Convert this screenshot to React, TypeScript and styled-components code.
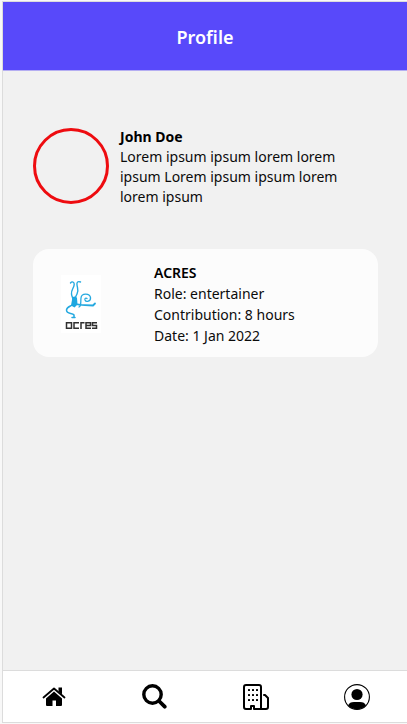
import React from "react";
import styled, { createGlobalStyle } from "styled-components";

const GlobalStyle = createGlobalStyle`
  *, *::before, *::after { box-sizing: border-box; }
  body {
    margin: 0;
    background: #f8f8f8;
    color: #0b0b0b;
    font-family: "Noto Sans", "Open Sans", sans-serif;
    font-size: 14px;
    line-height: 20px;
  }
`;

const Page = styled.div`
  display: flex;
  flex-direction: column;
  min-height: 100vh;
  padding: 1px 0 1px 2px;
`;

const Screen = styled.div`
  display: flex;
  flex: 1;
  flex-direction: column;
  border: 1px solid #dcdcdc;
  border-right: 0;
  background: #f1f1f1;
`;

const Header = styled.header`
  display: flex;
  align-items: center;
  justify-content: center;
  padding: 23px 16px 21px;
  border-bottom: 1px solid #b5aef2;
  background: #5849fa;
`;

const Title = styled.h1`
  margin: 0;
  color: #fff;
  font-size: 18px;
  font-weight: 600;
  line-height: 24px;
`;

const Content = styled.main`
  display: flex;
  flex: 1;
  flex-direction: column;
  gap: 42px;
  padding: 56px 29px 40px 30px;
`;

const Profile = styled.section`
  display: flex;
  align-items: flex-start;
  gap: 11px;
`;

const Avatar = styled.div`
  flex: none;
  width: 76px;
  height: 76px;
  margin-top: 1px;
  border: 3px solid #ee0c10;
  border-radius: 50%;
`;

const Name = styled.h2<{ $weight: number }>`
  margin: 0;
  color: #000;
  font-size: 14px;
  font-weight: ${(p) => p.$weight};
  line-height: inherit;
`;

const Text = styled.p`
  margin: 0;
`;

const Card = styled.article`
  display: flex;
  align-items: center;
  gap: 53px;
  padding: 13px 28px 11px;
  border-radius: 16px;
  background: #fcfcfc;
  line-height: 21px;
`;

const Logo = styled.svg`
  flex: none;
  width: 40px;
  height: 58px;
  background: #fff;
`;

const Nav = styled.nav`
  display: grid;
  grid-template-columns: repeat(4, 1fr);
  border-top: 1px solid #dcdcdc;
  background: #fff;
`;

const NavLink = styled.a`
  display: flex;
  align-items: center;
  justify-content: center;
  height: 51px;
  color: #000;
`;

const AcresLogo = () => (
  <Logo viewBox="0 0 40 58" role="img" aria-label="acres">
    <g fill="none" stroke="#25a9e0" strokeLinecap="round" strokeLinejoin="round">
      <path strokeWidth="1.4" d="M9.500 8c1.500-2 4-1 3.700 1.500C13 13 10 15 10.500 19c.2 2 1 3 1.500 5" />
      <path strokeWidth="1.4" d="M19.500 7c-2.500-1-4 0-3.500 3 .5 3.500 2 6 0 9-1.200 2-1.500 3-2 5" />
      <path strokeWidth="1.8" d="M14 28.500c5 2.500 10 1 18 2l2-2" />
      <path strokeWidth="1.3" d="M18 32c2.500-1 1.500-5 2-9 .5-5 8.500-5 9.500-.5.5 4-4.500 5-5.500 2.500-.5-1.500 1-2.500 2-1.500" />
      <path strokeWidth="1.5" d="M12 29.500c-3 2-6.500 2.500-6.500 5.500 0 4.500 6 2.500 7.500 5v2.500m-2 0h3" />
    </g>
    <path fill="#1da7e0" d="M11.500 22q3.500-1.500 4.500 1l.5 6.500-3 3-3.500-2Z" />
    <g fill="none" stroke="#303030" strokeWidth="1.5">
      <path d="M10.500 47.700H5.500v5.600h5m0-6.300v7M18 47.700h-5v5.600h5M20 54v-6.300h3.500M30 53.300h-5v-5.600h4.500v2.800H25M36 47.700h-4.500v2.800h4v2.800H31" />
    </g>
  </Logo>
);

const HomeIcon = () => (
  <svg width="24" height="20" viewBox="0 0 24 20" aria-hidden="true">
    <path fill="none" stroke="currentColor" strokeWidth="1.800" strokeLinecap="round" strokeLinejoin="round" d="m1.500 10.500 10.500-9 10.500 9" />
    <path fill="currentColor" d="M16.500 .5h3.500v7l-3.500-3Z" />
    <path fill="currentColor" d="m12 4.500 8 6.900V18a1 1 0 0 1-1 1h-5v-5.500h-3.500V19H5a1 1 0 0 1-1-1v-6.600Z" />
  </svg>
);

const SearchIcon = () => (
  <svg width="25" height="25" viewBox="0 0 25 25" aria-hidden="true">
    <g fill="none" stroke="currentColor" strokeLinecap="round">
      <circle cx="10.500" cy="10.500" r="8.700" strokeWidth="3.400" />
      <path strokeWidth="3.800" d="m17 17 5.700 5.700" />
    </g>
  </svg>
);

const BuildingIcon = () => (
  <svg width="28" height="28" viewBox="0 0 28 28" aria-hidden="true">
    <g fill="none" stroke="currentColor" strokeWidth="2" strokeLinejoin="round" strokeLinecap="round">
      <path d="M9 26H4a2 2 0 0 1-2-2V4a2 2 0 0 1 2-2h13a2 2 0 0 1 2 2v22h-7v-3H9Z" />
      <path d="M22 12h1l3 3v9a2 2 0 0 1-2 2h-5" />
    </g>
    <g fill="currentColor">
      {[6, 11, 16].map((y) =>
        [6, 10, 14].map((x) => <rect key={`${x}-${y}`} x={x} y={y} width="2" height="2" rx="0.5" />)
      )}
    </g>
  </svg>
);

const PersonIcon = () => (
  <svg width="26" height="26" viewBox="0 0 26 26" aria-hidden="true">
    <circle cx="13" cy="13" r="12.400" fill="none" stroke="currentColor" strokeWidth="1.100" />
    <circle cx="13" cy="10.500" r="5.600" fill="currentColor" />
    <path fill="currentColor" d="M4 21.500c1-2.500 3-3.500 6-3.500h6c3 0 5 1 6 3.500A12.500 12.500 0 0 1 4 21.500Z" />
  </svg>
);

const tabs = [
  { label: "Home", icon: <HomeIcon /> },
  { label: "Search", icon: <SearchIcon /> },
  { label: "Organisations", icon: <BuildingIcon /> },
  { label: "Profile", icon: <PersonIcon /> },
];

export default function App() {
  return (
    <>
      <GlobalStyle />
      <Page>
        <Screen>
          <Header>
            <Title>Profile</Title>
          </Header>
          <Content>
            <Profile>
              <Avatar />
              <div>
                <Name $weight={700}>John Doe</Name>
                <Text>Lorem ipsum ipsum lorem lorem ipsum Lorem ipsum ipsum lorem lorem ipsum</Text>
              </div>
            </Profile>
            <Card>
              <AcresLogo />
              <div>
                <Name $weight={600}>ACRES</Name>
                <Text>Role: entertainer</Text>
                <Text>Contribution: 8 hours</Text>
                <Text>Date: 1 Jan 2022</Text>
              </div>
            </Card>
          </Content>
          <Nav aria-label="Main">
            {tabs.map((tab) => (
              <NavLink key={tab.label} href="#" aria-label={tab.label}>
                {tab.icon}
              </NavLink>
            ))}
          </Nav>
        </Screen>
      </Page>
    </>
  );
}
